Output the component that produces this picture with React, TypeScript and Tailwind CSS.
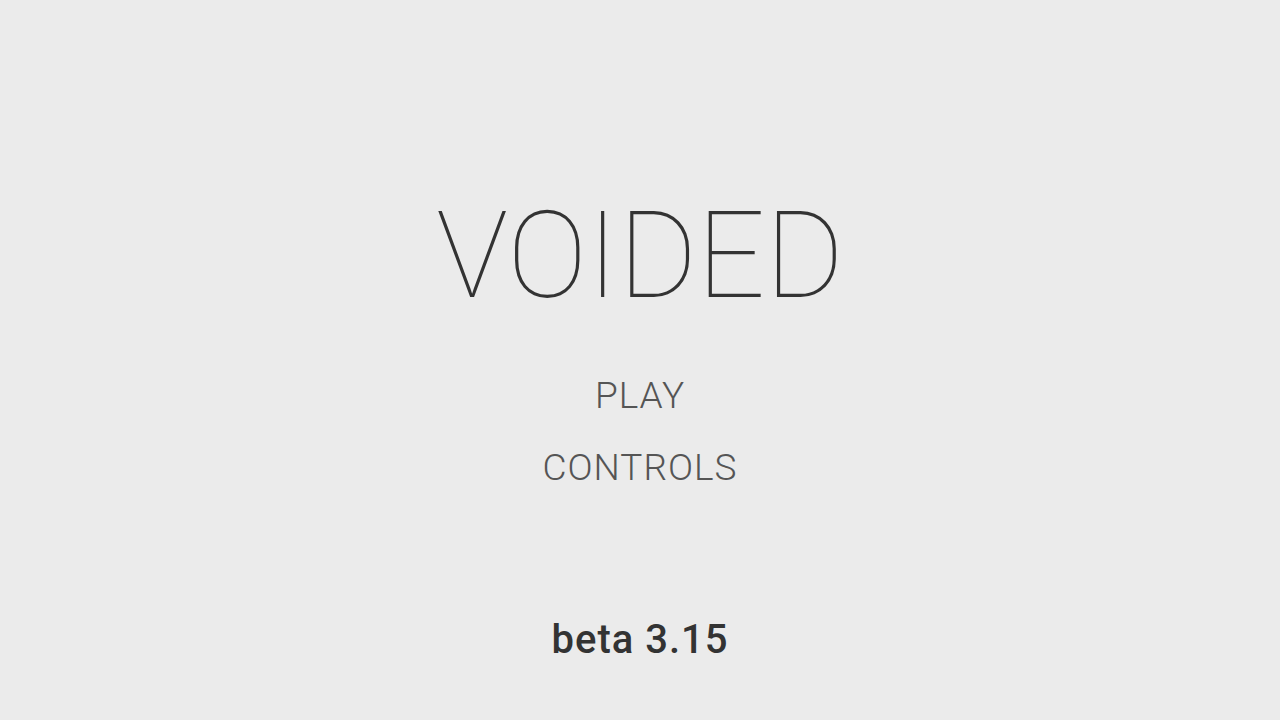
export default function App() {
  return (
    <div
      className="flex flex-col items-center w-full h-[720px] bg-[#ebebeb] pt-[196px] overflow-hidden"
      style={{ fontFamily: "Roboto, 'Liberation Sans', sans-serif" }}
    >
      <h1 className="text-[120px] leading-none font-thin text-[#333333]">VOIDED</h1>
      <div className="flex flex-col items-center mt-[61px] gap-[35px]">
        <button className="text-[37px] leading-none font-light tracking-[1px] text-[#555555]">PLAY</button>
        <button className="text-[37px] leading-none font-light tracking-[1px] text-[#555555]">CONTROLS</button>
      </div>
      <p className="mt-[134px] text-[40px] leading-none font-medium tracking-[1px] text-[#333333]">beta 3.15</p>
    </div>
  );
}
